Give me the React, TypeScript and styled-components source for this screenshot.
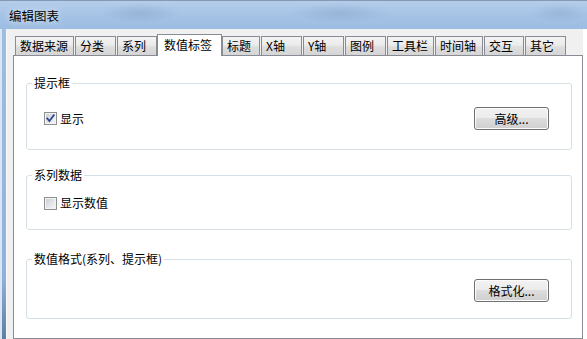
import styled, { createGlobalStyle } from "styled-components";
import { FC } from "react";

const GlobalStyle = createGlobalStyle`
  html, body {
    margin: 0;
    padding: 0;
    background: #fff;
  }
  body {
    font-family: "Noto Sans CJK SC", "Liberation Sans", sans-serif;
    font-size: 12px;
    color: #000;
  }
`;

// visible extents of each tab in the strip (left / right pixel)
const tabs = [
  { label: "数据来源", left: 15, right: 73 },
  { label: "分类", left: 75, right: 115 },
  { label: "系列", left: 117, right: 156 },
  { label: "数值标签", left: 157, right: 221, active: true },
  { label: "标题", left: 222, right: 259 },
  { label: "X轴", left: 261, right: 301 },
  { label: "Y轴", left: 303, right: 343 },
  { label: "图例", left: 345, right: 385 },
  { label: "工具栏", left: 387, right: 433 },
  { label: "时间轴", left: 435, right: 482 },
  { label: "交互", left: 484, right: 523 },
  { label: "其它", left: 525, right: 565 },
];

const Checkbox: FC<{ checked?: boolean; label: string }> = ({ checked, label }) => (
  <CheckLabel>
    <CheckBox>
      {checked && (
        <svg width="11" height="11" viewBox="0 0 11 11">
          <path
            d="M2.2 5.4 L4.4 8 L8.8 2.2"
            fill="none"
            stroke="#33478f"
            strokeWidth="1.8"
            strokeLinecap="square"
          />
        </svg>
      )}
    </CheckBox>
    <span>{label}</span>
  </CheckLabel>
);

export default function App() {
  return (
    <>
      <GlobalStyle />
      <Window>
        <TitleBar>编辑图表</TitleBar>
        <Body>
          <LeftFrame />
          <Client>
            <TabStrip>
              {tabs.map((t, i) => {
                // the strip starts at x = 13 (panel border)
                const prev = i === 0 ? 12 : tabs[i - 1].right;
                return (
                  <Tab
                    key={t.label}
                    $w={t.right - t.left + 1}
                    $ml={t.left - prev - 1}
                    $active={!!t.active}
                  >
                    {t.label}
                  </Tab>
                );
              })}
            </TabStrip>
            <TabPanel>
              <Group>
                <Legend>提示框</Legend>
                <GroupBody $pt={17} $pb={19}>
                  <Checkbox checked label="显示" />
                  <Button>高级...</Button>
                </GroupBody>
              </Group>
              <Group $mt={18}>
                <Legend>系列数据</Legend>
                <GroupBody $pt={14} $pb={19}>
                  <Checkbox label="显示数值" />
                </GroupBody>
              </Group>
              <Group $mt={22}>
                <Legend>数值格式(系列、提示框)</Legend>
                <GroupBody $pt={13} $pb={16}>
                  <span />
                  <Button>格式化...</Button>
                </GroupBody>
              </Group>
            </TabPanel>
          </Client>
          <RightEdge />
        </Body>
      </Window>
    </>
  );
}

const Window = styled.div`
  width: 587px;
  height: 339px;
  overflow: hidden;
  display: flex;
  flex-direction: column;
`;

const TitleBar = styled.div`
  height: 29px;
  box-sizing: border-box;
  border-top: 1px solid #8499b4;
  padding: 8px 0 0 9px;
  line-height: 14px;
  font-size: 12.5px;
  color: #000;
  text-shadow: 0 0 6px rgba(255, 255, 255, 0.9);
  background:
    radial-gradient(ellipse 40px 10px at 140px 12px, rgba(120, 150, 190, 0.35), transparent),
    radial-gradient(ellipse 50px 10px at 340px 12px, rgba(120, 150, 190, 0.35), transparent),
    radial-gradient(ellipse 30px 10px at 560px 12px, rgba(120, 150, 190, 0.3), transparent),
    linear-gradient(180deg, #b4cdea 0%, #a5c2e5 55%, #9dbce2 100%);
`;

const Body = styled.div`
  flex: 1;
  display: flex;
  min-height: 0;
`;

const LeftFrame = styled.div`
  width: 6px;
  background:
    linear-gradient(90deg, #dbe6f3 0 2px, transparent 2px),
    linear-gradient(180deg, #9ebde2 0%, #8fb2dc 80%, #5f7ea3 100%);
`;

const RightEdge = styled.div`
  width: 4px;
  background: #fff;
`;

const Client = styled.div`
  flex: 1;
  display: flex;
  flex-direction: column;
  background: #f0f0f0;
  border-left: 1px solid #fbfbfb;
  padding: 5px 0 0 6px;
  min-width: 0;
`;

const TabStrip = styled.div`
  display: flex;
  align-items: flex-end;
  height: 21px;
  position: relative;
  z-index: 1;
`;

const Tab = styled.div<{ $w: number; $ml: number; $active: boolean }>`
  box-sizing: border-box;
  flex: none;
  width: ${(p) => p.$w}px;
  margin-left: ${(p) => p.$ml}px;
  height: ${(p) => (p.$active ? 22 : 19)}px;
  margin-bottom: ${(p) => (p.$active ? -1 : 0)}px;
  border: 1px solid #898c95;
  border-bottom: none;
  display: flex;
  align-items: center;
  padding-left: ${(p) => (p.$active ? 6 : 4)}px;
  padding-bottom: ${(p) => (p.$active ? 2 : 0)}px;
  line-height: 14px;
  white-space: nowrap;
  background: ${(p) =>
    p.$active
      ? "#fff"
      : "linear-gradient(180deg, #f3f3f3 0%, #ebebeb 45%, #dedede 55%, #d5d5d5 100%)"};
`;

const TabPanel = styled.div`
  flex: 1;
  border: 1px solid #898c95;
  background: #fff;
  padding: 20px 10px 0 12px;
`;

const Group = styled.fieldset<{ $mt?: number }>`
  margin: ${(p) => p.$mt ?? 0}px 0 0 0;
  padding: 0;
  min-inline-size: 0;
  border: 1px solid #d5dfe5;
  border-radius: 3px;
`;

const Legend = styled.legend`
  font-size: 12px;
  line-height: 14px;
  padding: 0 2px;
  margin-left: 5px;
`;

const GroupBody = styled.div<{ $pt: number; $pb: number }>`
  display: flex;
  align-items: center;
  justify-content: space-between;
  padding: ${(p) => p.$pt}px 22px ${(p) => p.$pb}px 17px;
`;

const CheckLabel = styled.label`
  display: flex;
  align-items: center;
  gap: 3px;
  line-height: 14px;
`;

const CheckBox = styled.span`
  box-sizing: border-box;
  width: 13px;
  height: 13px;
  border: 1px solid #8e8f8f;
  display: flex;
  align-items: center;
  justify-content: center;
  background: linear-gradient(135deg, #c6cad1 0%, #e4e6ea 55%, #f7f7f7 100%);
  box-shadow: inset 0 0 0 1px #f4f4f4;
`;

const Button = styled.button`
  box-sizing: border-box;
  width: 75px;
  height: 23px;
  padding: 0;
  border: 1px solid #707070;
  border-radius: 3px;
  font-family: "Noto Sans CJK SC", "Liberation Sans", sans-serif;
  font-size: 12px;
  line-height: 14px;
  color: #000;
  background: linear-gradient(180deg, #f2f2f2 0%, #ebebeb 50%, #dddddd 50%, #cfcfcf 100%);
  box-shadow: inset 0 0 0 1px #fcfcfc;
`;
